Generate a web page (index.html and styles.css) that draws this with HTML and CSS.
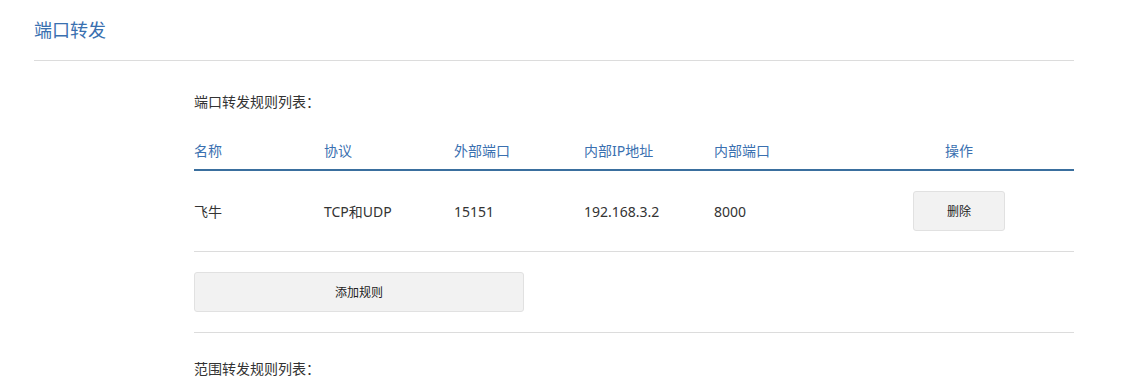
FILE: index.html
```html
<!DOCTYPE html>
<html lang="zh-CN">
<head>
<meta charset="utf-8">
<title>端口转发</title>
<link rel="stylesheet" href="styles.css">
</head>
<body>
<div class="page">
  <h1 class="title">端口转发</h1>
  <div class="content">
    <div class="label first">端口转发规则列表：</div>
    <div class="table">
      <div class="row head">
        <div class="cell">名称</div>
        <div class="cell">协议</div>
        <div class="cell">外部端口</div>
        <div class="cell">内部IP地址</div>
        <div class="cell">内部端口</div>
        <div class="cell op">操作</div>
      </div>
      <div class="row body-row">
        <div class="cell">飞牛</div>
        <div class="cell">TCP和UDP</div>
        <div class="cell">15151</div>
        <div class="cell">192.168.3.2</div>
        <div class="cell">8000</div>
        <div class="cell op"><button class="btn del">删除</button></div>
      </div>
    </div>
    <div class="add-wrap">
      <button class="btn add">添加规则</button>
    </div>
    <div class="label">范围转发规则列表：</div>
  </div>
</div>
</body>
</html>
```
FILE: styles.css
```css
* { box-sizing: border-box; }
html, body { margin: 0; padding: 0; background: #fff; }
body {
  font-family: "Noto Sans", "Noto Sans CJK SC", sans-serif;
  font-size: 14px;
  color: #333;
}
.page {
  width: 1074px;
  padding-left: 34px;
}
.title {
  margin: 0;
  height: 61px;
  line-height: 60px;
  font-size: 18px;
  font-weight: normal;
  color: #3a70b0;
  border-bottom: 1px solid #dcdcdc;
}
.content {
  margin-left: 160px;
}
.label {
  line-height: 20px;
  margin-top: 26px;
  color: #333;
}
.label.first { margin-top: 31px; }
.table { margin-top: 21px; }
.row {
  display: grid;
  grid-template-columns: 130px 130px 130px 130px 130px 1fr;
  align-items: center;
}
.row.head {
  height: 38px;
  padding-bottom: 2px;
  border-bottom: 2px solid #3a6f9e;
  color: #3a70b0;
}
.row.body-row {
  height: 81px;
  border-bottom: 1px solid #dcdcdc;
}
.cell.op {
  text-align: center;
}
.btn {
  font-family: "Noto Sans", "Noto Sans CJK SC", sans-serif;
  font-size: 12px;
  color: #222;
  background: #f2f2f2;
  border: 1px solid #e1e1e1;
  border-radius: 3px;
  height: 40px;
  padding: 0;
  cursor: pointer;
}
.btn.del { width: 92px; vertical-align: middle; }
.add-wrap {
  padding: 20px 0;
  border-bottom: 1px solid #dcdcdc;
}
.btn.add { width: 330px; display: block; }
```
